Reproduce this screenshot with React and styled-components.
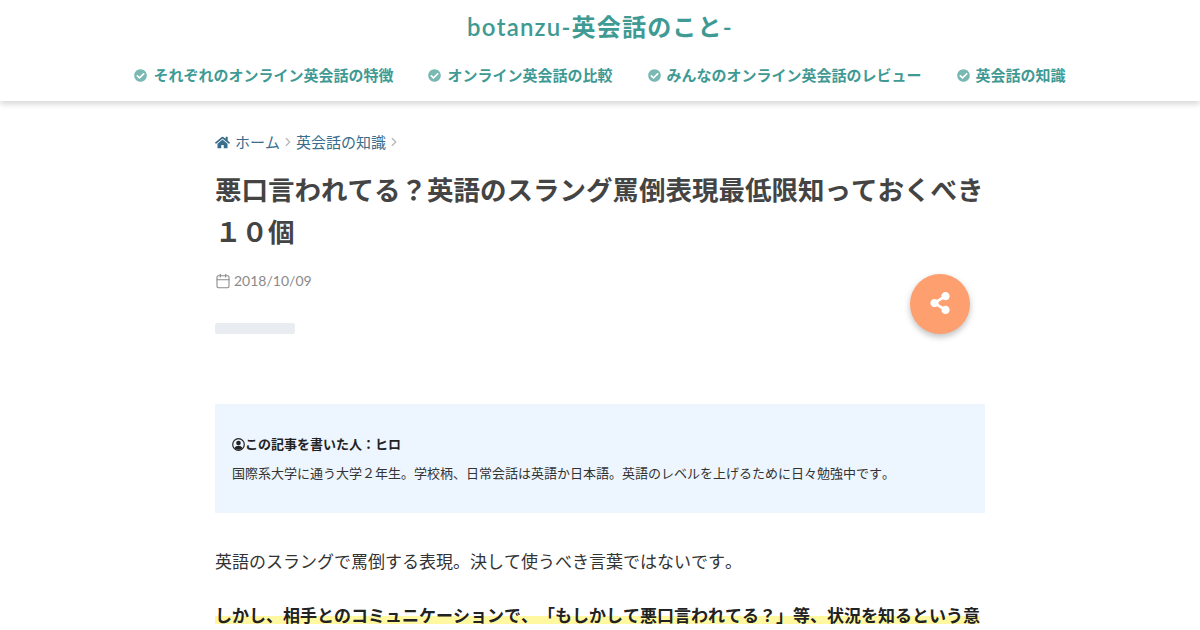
import styled, { createGlobalStyle } from 'styled-components';
import { FaCheckCircle, FaHome, FaShareAlt } from 'react-icons/fa';
import { Calendar, ChevronRight } from 'lucide-react';

const GlobalStyle = createGlobalStyle`
  html, body {
    margin: 0;
    padding: 0;
    height: 630px;
    overflow: hidden;
    background: #fff;
    font-family: "Lato", "Noto Sans CJK JP", sans-serif;
    color: #333;
    text-spacing-trim: space-all;
    font-kerning: none;
  }
`;

const Header = styled.header`
  height: 101px;
  background: #fff;
  box-shadow: 0 3px 6px rgba(0, 0, 0, 0.16);
  box-sizing: border-box;
  padding-top: 11px;
`;

const SiteTitle = styled.div`
  text-align: center;
  font-size: 24px;
  line-height: 32px;
  font-weight: 600;
  letter-spacing: 1.2px;
  color: #3f9a94;
`;

const Nav = styled.nav`
  display: flex;
  justify-content: center;
  gap: 35px;
  margin-top: 20px;
`;

const NavItem = styled.a`
  display: flex;
  align-items: center;
  gap: 6px;
  font-size: 15px;
  line-height: 24px;
  font-weight: 700;
  color: #3f9a94;
  svg {
    color: #7ab8b3;
    font-size: 13px;
  }
`;

const Main = styled.main`
  position: relative;
  width: 770px;
  margin: 0 auto;
  padding-top: 29px;
`;

const Breadcrumb = styled.div`
  display: flex;
  align-items: center;
  font-size: 15px;
  line-height: 24px;
  color: #3a6d8c;
`;

const HomeIcon = styled(FaHome)`
  font-size: 15px;
  margin-right: 5px;
`;

const Separator = styled(ChevronRight)`
  color: #b5b5b5;
  margin: 0 1px;
`;

const Title = styled.h1`
  margin: 16px 0 0;
  font-size: 26.5px;
  line-height: 41.5px;
  font-weight: 700;
  color: #444;
`;

const DateRow = styled.div`
  display: flex;
  align-items: center;
  gap: 3px;
  margin-top: 16px;
  font-size: 14px;
  line-height: 24px;
  color: #8a8a8a;
`;

const Placeholder = styled.div`
  width: 80px;
  height: 11px;
  margin-top: 30px;
  background: #e9edf1;
  border-radius: 2px;
`;

const ShareButton = styled.div`
  position: absolute;
  top: 173px;
  right: 15px;
  width: 60px;
  height: 60px;
  box-sizing: border-box;
  padding-bottom: 2px;
  border-radius: 50%;
  background: #fd9f6f;
  box-shadow: 0 3px 6px rgba(0, 0, 0, 0.25);
  display: flex;
  align-items: center;
  justify-content: center;
  color: #fff;
  font-size: 22px;
`;

const AuthorBox = styled.section`
  margin-top: 70px;
  height: 109px;
  box-sizing: border-box;
  padding: 29px 17px 0;
  background: #edf5fe;
  color: #222;
`;

const AuthorName = styled.div`
  display: flex;
  align-items: center;
  font-size: 13px;
  line-height: 22px;
  font-weight: 700;
`;

const AuthorText = styled.p`
  margin: 7px 0 0;
  font-size: 13px;
  line-height: 22px;
  color: #333;
`;

const Paragraph = styled.p`
  margin: 35px 0 0;
  font-size: 17px;
  line-height: 27px;
  color: #333;

  & + & {
    margin-top: 27px;
  }
`;

const Marked = styled.strong`
  color: #222;
  background: linear-gradient(transparent 54%, #fff8a0 54%, #fff8a0 90%, transparent 90%);
`;

const UserIcon = () => (
  <svg width="13" height="13" viewBox="0 0 13 13" aria-hidden="true">
    <circle cx="6.5" cy="6.5" r="5.8" fill="none" stroke="currentColor" strokeWidth="1.2" />
    <circle cx="6.5" cy="5" r="2.3" fill="currentColor" />
    <path d="M2.6 10.2c.7-1.7 2.2-2.4 3.9-2.4s3.2.7 3.9 2.4a5.4 5.4 0 0 1-7.8 0z" fill="currentColor" />
  </svg>
);

const NAV_ITEMS = [
  'それぞれのオンライン英会話の特徴',
  'オンライン英会話の比較',
  'みんなのオンライン英会話のレビュー',
  '英会話の知識',
];

export default function App() {
  return (
    <>
      <GlobalStyle />
      <Header>
        <SiteTitle>botanzu-英会話のこと-</SiteTitle>
        <Nav>
          {NAV_ITEMS.map((item) => (
            <NavItem key={item}>
              <FaCheckCircle />
              {item}
            </NavItem>
          ))}
        </Nav>
      </Header>
      <Main>
        <Breadcrumb>
          <HomeIcon />
          ホーム
          <Separator size={14} strokeWidth={2} />
          英会話の知識
          <Separator size={14} strokeWidth={2} />
        </Breadcrumb>
        <Title>悪口言われてる？英語のスラング罵倒表現最低限知っておくべき１０個</Title>
        <DateRow>
          <Calendar size={16} strokeWidth={1.6} />
          2018/10/09
        </DateRow>
        <Placeholder />
        <ShareButton>
          <FaShareAlt />
        </ShareButton>
        <AuthorBox>
          <AuthorName>
            <UserIcon />
            この記事を書いた人：ヒロ
          </AuthorName>
          <AuthorText>国際系大学に通う大学２年生。学校柄、日常会話は英語か日本語。英語のレベルを上げるために日々勉強中です。</AuthorText>
        </AuthorBox>
        <Paragraph>英語のスラングで罵倒する表現。決して使うべき言葉ではないです。</Paragraph>
        <Paragraph>
          <Marked>しかし、相手とのコミュニケーションで、「もしかして悪口言われてる？」等、状況を知るという意</Marked>
        </Paragraph>
      </Main>
    </>
  );
}
